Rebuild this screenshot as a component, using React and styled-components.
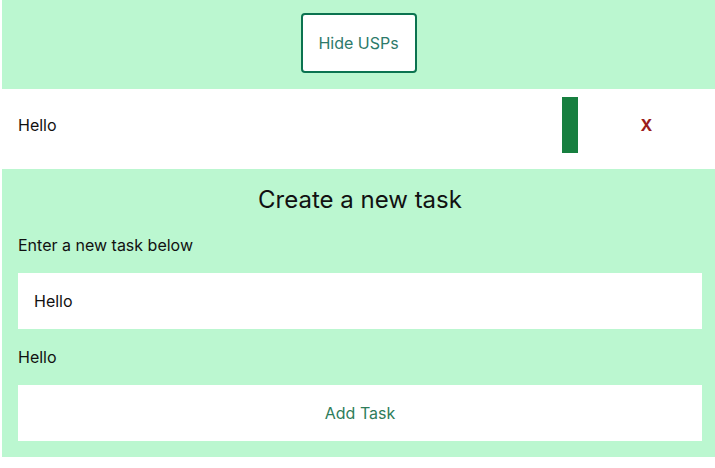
import React from "react";
import styled, { createGlobalStyle } from "styled-components";

const GlobalStyle = createGlobalStyle`
  body {
    margin: 0;
    font-family: Inter, "Noto Sans", sans-serif;
    color: #111;
    background: #fff;
  }
`;

const green_bg = "#bbf7d0";

const Page = styled.div`
  margin-left: 2px;
  width: 713px;
`;

const TopBar = styled.div`
  background: ${green_bg};
  height: 89px;
  display: flex;
  justify-content: center;
  align-items: flex-start;
  padding-top: 13px;
  box-sizing: border-box;
`;

const OutlineButton = styled.button`
  width: 116px;
  height: 60px;
  background: #fff;
  border: 2px solid #0b7350;
  border-radius: 4px;
  font-family: Inter, sans-serif;
  font-size: 16px;
  color: #2d7a6a;
  cursor: pointer;
`;

const TaskRow = styled.div`
  display: grid;
  grid-template-columns: 1fr 16px 137px;
  align-items: center;
  height: 80px;
  box-sizing: border-box;
  padding: 0 0 8px 16px;
  background: #fff;
`;

const TaskText = styled.span`
  font-size: 16px;
`;

const StatusBar = styled.div`
  height: 56px;
  background: #177f40;
`;

const DeleteButton = styled.span`
  justify-self: center;
  font-size: 16px;
  font-weight: 700;
  color: #9b1c1c;
  cursor: pointer;
`;

const CreateSection = styled.section`
  background: ${green_bg};
  display: flex;
  flex-direction: column;
  padding: 16px 13px 16px 16px;
`;

const Heading = styled.h2`
  margin: 0;
  font-size: 24px;
  font-weight: 400;
  line-height: 30px;
  text-align: center;
`;

const Label = styled.p`
  margin: ${p => p.$top || 0}px 0 0;
  font-size: 16px;
  line-height: 20px;
`;

const TaskInput = styled.input`
  margin-top: 18px;
  height: 56px;
  border: none;
  outline: none;
  padding: 0 16px;
  font-family: Inter, sans-serif;
  font-size: 16px;
  color: #111;
  background: #fff;
  box-sizing: border-box;
`;

const AddButton = styled.button`
  margin-top: 18px;
  height: 56px;
  border: none;
  background: #fff;
  font-family: Inter, sans-serif;
  font-size: 16px;
  color: #2e7d5b;
  cursor: pointer;
`;

export default function App() {
  return (
    <Page>
      <GlobalStyle />
      <TopBar>
        <OutlineButton>Hide USPs</OutlineButton>
      </TopBar>
      <TaskRow>
        <TaskText>Hello</TaskText>
        <StatusBar />
        <DeleteButton>X</DeleteButton>
      </TaskRow>
      <CreateSection>
        <Heading>Create a new task</Heading>
        <Label $top={20}>Enter a new task below</Label>
        <TaskInput defaultValue="Hello" />
        <Label $top={18}>Hello</Label>
        <AddButton>Add Task</AddButton>
      </CreateSection>
    </Page>
  );
}
